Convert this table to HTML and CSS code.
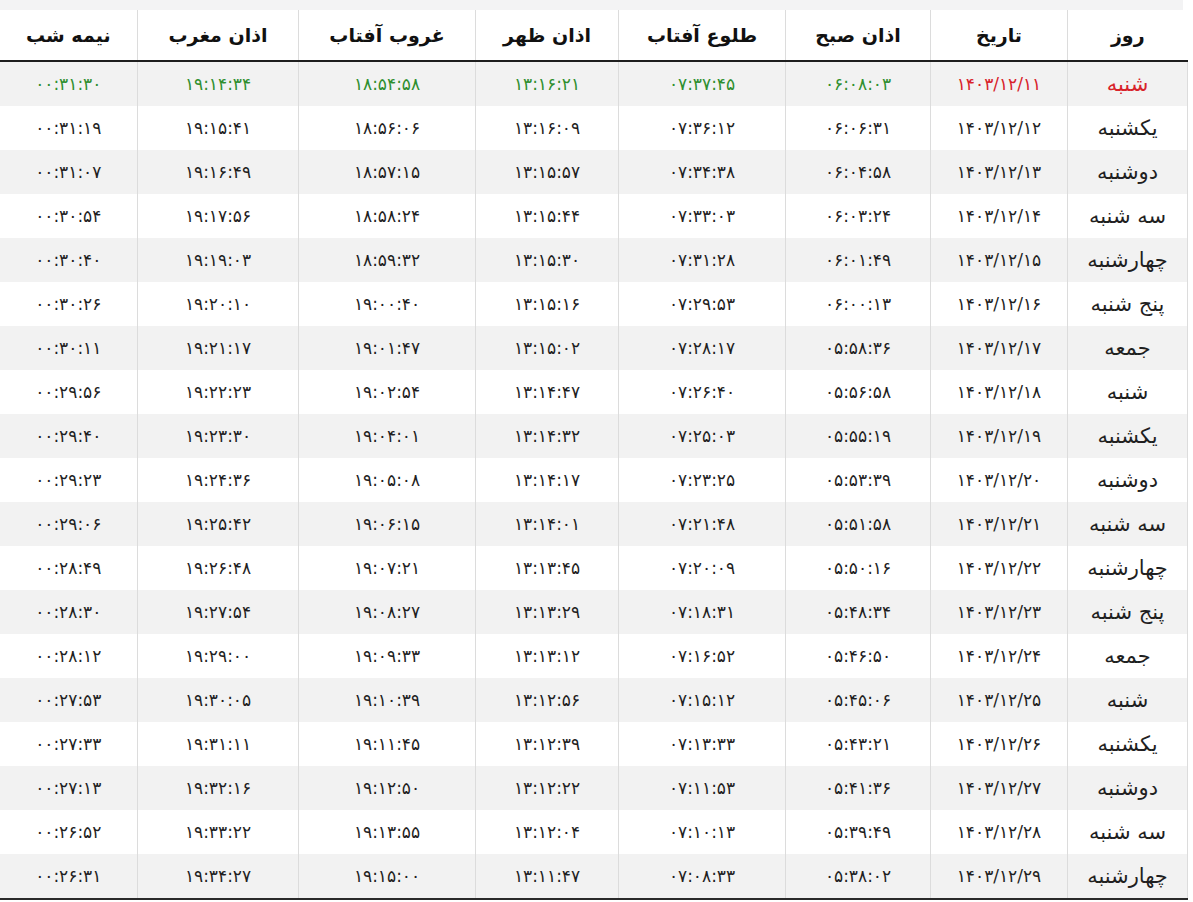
FILE: index.html
```html
<!DOCTYPE html>
<html lang="fa" dir="rtl">
<head>
<meta charset="utf-8">
<title>اوقات شرعی</title>
<link rel="stylesheet" href="styles.css">
</head>
<body>
<div class="topstrip"></div>
<table class="times">
<colgroup>
<col class="c-day"><col class="c-date"><col class="c-fajr"><col class="c-sunrise"><col class="c-dhuhr"><col class="c-sunset"><col class="c-maghrib"><col class="c-midnight">
</colgroup>
<thead>
<tr><th>روز</th><th>تاریخ</th><th>اذان صبح</th><th>طلوع آفتاب</th><th>اذان ظهر</th><th>غروب آفتاب</th><th>اذان مغرب</th><th>نیمه شب</th></tr>
</thead>
<tbody>
<tr class="today"><td class="day red">شنبه</td><td class="red">۱۴۰۳/۱۲/۱۱</td><td class="green">۰۶:۰۸:۰۳</td><td class="green">۰۷:۳۷:۴۵</td><td class="green">۱۳:۱۶:۲۱</td><td class="green">۱۸:۵۴:۵۸</td><td class="green">۱۹:۱۴:۳۴</td><td class="green">۰۰:۳۱:۳۰</td></tr>
<tr><td class="day">یکشنبه</td><td>۱۴۰۳/۱۲/۱۲</td><td>۰۶:۰۶:۳۱</td><td>۰۷:۳۶:۱۲</td><td>۱۳:۱۶:۰۹</td><td>۱۸:۵۶:۰۶</td><td>۱۹:۱۵:۴۱</td><td>۰۰:۳۱:۱۹</td></tr>
<tr><td class="day">دوشنبه</td><td>۱۴۰۳/۱۲/۱۳</td><td>۰۶:۰۴:۵۸</td><td>۰۷:۳۴:۳۸</td><td>۱۳:۱۵:۵۷</td><td>۱۸:۵۷:۱۵</td><td>۱۹:۱۶:۴۹</td><td>۰۰:۳۱:۰۷</td></tr>
<tr><td class="day">سه شنبه</td><td>۱۴۰۳/۱۲/۱۴</td><td>۰۶:۰۳:۲۴</td><td>۰۷:۳۳:۰۳</td><td>۱۳:۱۵:۴۴</td><td>۱۸:۵۸:۲۴</td><td>۱۹:۱۷:۵۶</td><td>۰۰:۳۰:۵۴</td></tr>
<tr><td class="day">چهارشنبه</td><td>۱۴۰۳/۱۲/۱۵</td><td>۰۶:۰۱:۴۹</td><td>۰۷:۳۱:۲۸</td><td>۱۳:۱۵:۳۰</td><td>۱۸:۵۹:۳۲</td><td>۱۹:۱۹:۰۳</td><td>۰۰:۳۰:۴۰</td></tr>
<tr><td class="day">پنج شنبه</td><td>۱۴۰۳/۱۲/۱۶</td><td>۰۶:۰۰:۱۳</td><td>۰۷:۲۹:۵۳</td><td>۱۳:۱۵:۱۶</td><td>۱۹:۰۰:۴۰</td><td>۱۹:۲۰:۱۰</td><td>۰۰:۳۰:۲۶</td></tr>
<tr><td class="day">جمعه</td><td>۱۴۰۳/۱۲/۱۷</td><td>۰۵:۵۸:۳۶</td><td>۰۷:۲۸:۱۷</td><td>۱۳:۱۵:۰۲</td><td>۱۹:۰۱:۴۷</td><td>۱۹:۲۱:۱۷</td><td>۰۰:۳۰:۱۱</td></tr>
<tr><td class="day">شنبه</td><td>۱۴۰۳/۱۲/۱۸</td><td>۰۵:۵۶:۵۸</td><td>۰۷:۲۶:۴۰</td><td>۱۳:۱۴:۴۷</td><td>۱۹:۰۲:۵۴</td><td>۱۹:۲۲:۲۳</td><td>۰۰:۲۹:۵۶</td></tr>
<tr><td class="day">یکشنبه</td><td>۱۴۰۳/۱۲/۱۹</td><td>۰۵:۵۵:۱۹</td><td>۰۷:۲۵:۰۳</td><td>۱۳:۱۴:۳۲</td><td>۱۹:۰۴:۰۱</td><td>۱۹:۲۳:۳۰</td><td>۰۰:۲۹:۴۰</td></tr>
<tr><td class="day">دوشنبه</td><td>۱۴۰۳/۱۲/۲۰</td><td>۰۵:۵۳:۳۹</td><td>۰۷:۲۳:۲۵</td><td>۱۳:۱۴:۱۷</td><td>۱۹:۰۵:۰۸</td><td>۱۹:۲۴:۳۶</td><td>۰۰:۲۹:۲۳</td></tr>
<tr><td class="day">سه شنبه</td><td>۱۴۰۳/۱۲/۲۱</td><td>۰۵:۵۱:۵۸</td><td>۰۷:۲۱:۴۸</td><td>۱۳:۱۴:۰۱</td><td>۱۹:۰۶:۱۵</td><td>۱۹:۲۵:۴۲</td><td>۰۰:۲۹:۰۶</td></tr>
<tr><td class="day">چهارشنبه</td><td>۱۴۰۳/۱۲/۲۲</td><td>۰۵:۵۰:۱۶</td><td>۰۷:۲۰:۰۹</td><td>۱۳:۱۳:۴۵</td><td>۱۹:۰۷:۲۱</td><td>۱۹:۲۶:۴۸</td><td>۰۰:۲۸:۴۹</td></tr>
<tr><td class="day">پنج شنبه</td><td>۱۴۰۳/۱۲/۲۳</td><td>۰۵:۴۸:۳۴</td><td>۰۷:۱۸:۳۱</td><td>۱۳:۱۳:۲۹</td><td>۱۹:۰۸:۲۷</td><td>۱۹:۲۷:۵۴</td><td>۰۰:۲۸:۳۰</td></tr>
<tr><td class="day">جمعه</td><td>۱۴۰۳/۱۲/۲۴</td><td>۰۵:۴۶:۵۰</td><td>۰۷:۱۶:۵۲</td><td>۱۳:۱۳:۱۲</td><td>۱۹:۰۹:۳۳</td><td>۱۹:۲۹:۰۰</td><td>۰۰:۲۸:۱۲</td></tr>
<tr><td class="day">شنبه</td><td>۱۴۰۳/۱۲/۲۵</td><td>۰۵:۴۵:۰۶</td><td>۰۷:۱۵:۱۲</td><td>۱۳:۱۲:۵۶</td><td>۱۹:۱۰:۳۹</td><td>۱۹:۳۰:۰۵</td><td>۰۰:۲۷:۵۳</td></tr>
<tr><td class="day">یکشنبه</td><td>۱۴۰۳/۱۲/۲۶</td><td>۰۵:۴۳:۲۱</td><td>۰۷:۱۳:۳۳</td><td>۱۳:۱۲:۳۹</td><td>۱۹:۱۱:۴۵</td><td>۱۹:۳۱:۱۱</td><td>۰۰:۲۷:۳۳</td></tr>
<tr><td class="day">دوشنبه</td><td>۱۴۰۳/۱۲/۲۷</td><td>۰۵:۴۱:۳۶</td><td>۰۷:۱۱:۵۳</td><td>۱۳:۱۲:۲۲</td><td>۱۹:۱۲:۵۰</td><td>۱۹:۳۲:۱۶</td><td>۰۰:۲۷:۱۳</td></tr>
<tr><td class="day">سه شنبه</td><td>۱۴۰۳/۱۲/۲۸</td><td>۰۵:۳۹:۴۹</td><td>۰۷:۱۰:۱۳</td><td>۱۳:۱۲:۰۴</td><td>۱۹:۱۳:۵۵</td><td>۱۹:۳۳:۲۲</td><td>۰۰:۲۶:۵۲</td></tr>
<tr><td class="day">چهارشنبه</td><td>۱۴۰۳/۱۲/۲۹</td><td>۰۵:۳۸:۰۲</td><td>۰۷:۰۸:۳۳</td><td>۱۳:۱۱:۴۷</td><td>۱۹:۱۵:۰۰</td><td>۱۹:۳۴:۲۷</td><td>۰۰:۲۶:۳۱</td></tr>
</tbody>
</table>
</body>
</html>
```

FILE: styles.css
```css
html, body {
  margin: 0;
  padding: 0;
  background: #ffffff;
}
body {
  font-family: "DejaVu Sans", "Noto Sans", sans-serif;
  color: #1a1a1a;
  width: 1193px;
}
.topstrip {
  height: 10px;
  width: 1183px;
  margin-right: 10px;
  background: #f3f3f4;
}
.times {
  width: 1188px;
  margin-right: 5px;
  border-collapse: collapse;
  table-layout: fixed;
  border-bottom: 2px solid #2a2a2a;
}
.c-day { width: 120px; }
.c-date { width: 137px; }
.c-fajr { width: 145px; }
.c-sunrise { width: 167px; }
.c-dhuhr { width: 143px; }
.c-sunset { width: 177px; }
.c-maghrib { width: 161px; }
.c-midnight { width: 138px; }
.times th {
  height: 50px;
  padding: 0;
  font-size: 19px;
  font-weight: bold;
  color: #111;
  background: #fff;
  border-left: 1px solid #dcdcdc;
  border-bottom: 2px solid #1e1e1e;
  text-align: center;
  vertical-align: middle;
}
.times th:last-child { border-left: none; }
.times tbody tr:first-child td { border-top: 2px solid #fff; }
.times td {
  height: 44px;
  padding: 0;
  font-size: 17px;
  letter-spacing: 1.2px;
  text-align: center;
  vertical-align: middle;
  border-left: 1px solid #dcdcdc;
  color: #1f1f1f;
}
.times td.day {
  font-size: 21px;
  letter-spacing: 0;
}
.times td:last-child { border-left: none; }
.times td:first-child { border-right: 1px solid #dcdcdc; }
.times tbody tr:nth-child(odd) td { background: #f2f2f2; }
.times td.red { color: #d8232a; }
.times td.green { color: #2f8f2f; }
```
